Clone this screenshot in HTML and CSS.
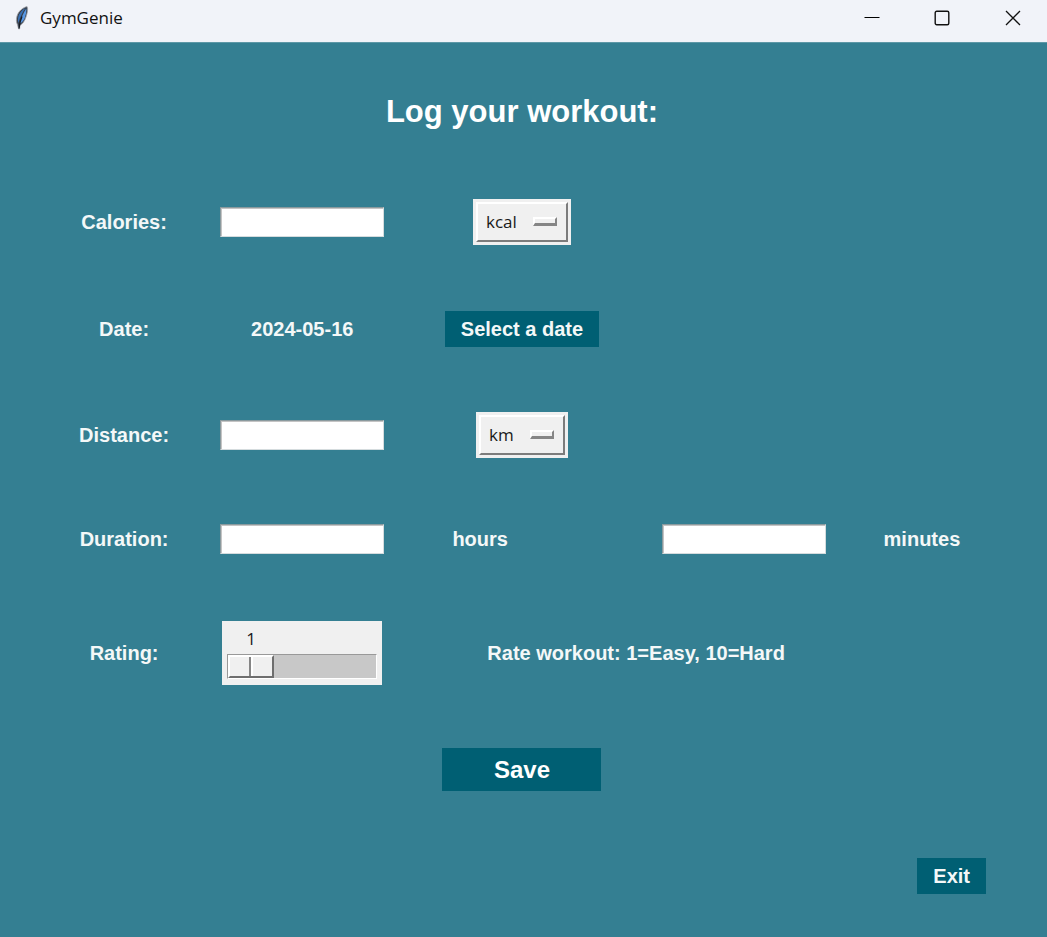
FILE: index.html
```
<!DOCTYPE html>
<html lang="en">
<head>
<meta charset="utf-8">
<meta name="viewport" content="width=device-width, initial-scale=1">
<title>GymGenie</title>
<link rel="stylesheet" href="styles.css">
</head>
<body>
<header class="titlebar">
  <svg class="feather" viewBox="0 0 16 26" width="16" height="26" aria-hidden="true">
    <path d="M13 1.500C9 2.500 4.500 6 3 11c-.9 3-.8 6.500.4 8.500L4.600 24h1l.4-3.500c2.500-1.500 4.800-4.500 6-8.500C13.200 8.500 14.500 4 13 1.500z" fill="#39404c" stroke="#a5a7ae" stroke-width=".8"/>
    <path d="M11.500 3C8.500 4.500 5 8 4.200 12.500c-.4 2-.3 4 0 5.500C6 12.500 8.500 7 11.500 3z" fill="#3a71b5"/>
    <path d="M12.300 3.500C9.500 7.500 7.200 13 5.800 18.500c3-1.500 4.800-4 5.500-7.500.7-2.500 1.300-5 1-7.500z" fill="#5a99e6"/>
    <path d="M8 11.500C6.500 15 5.500 18.500 5 23.500" fill="none" stroke="#141a24" stroke-width="1.200"/>
  </svg>
  <span class="app-name">GymGenie</span>
  <div class="window-buttons">
    <button class="window-button" type="button" aria-label="Minimize">
      <svg viewBox="0 0 16 16" width="16" height="16"><path d="M.5 7.500h15" stroke="#000" fill="none"/></svg>
    </button>
    <button class="window-button" type="button" aria-label="Maximize">
      <svg viewBox="0 0 16 16" width="16" height="16"><rect x="1.200" y="1.200" width="13.600" height="13.600" rx="1.500" stroke="#111" stroke-width="1.400" fill="none"/></svg>
    </button>
    <button class="window-button" type="button" aria-label="Close">
      <svg viewBox="0 0 16 16" width="16" height="16"><path d="M1 1l14 14M15 1L1 15" stroke="#111" stroke-width="1.300" fill="none"/></svg>
    </button>
  </div>
</header>
<main class="content">
  <form class="workout">
    <h1 class="heading">Log your workout:</h1>

    <label class="c1" for="calories">Calories:</label>
    <input class="entry" id="calories" type="text">
    <div class="option">
      <select class="option-select" aria-label="Energy unit"><option>kcal</option></select>
    </div>

    <span class="c1">Date:</span>
    <span>2024-05-16</span>
    <button class="button" type="button">Select a date</button>

    <label class="c1" for="distance">Distance:</label>
    <input class="entry" id="distance" type="text">
    <div class="option">
      <select class="option-select" aria-label="Distance unit"><option>km</option></select>
    </div>

    <label class="c1" for="hours">Duration:</label>
    <input class="entry" id="hours" type="text">
    <label class="hours" for="hours">hours</label>
    <input class="entry" id="minutes" type="text">
    <label for="minutes">minutes</label>

    <label class="c1" for="rating">Rating:</label>
    <div class="scale">
      <output class="scale-value" for="rating">1</output>
      <input class="scale-range" id="rating" type="range" min="1" max="10" value="1">
    </div>
    <span class="hint">Rate workout: 1=Easy, 10=Hard</span>

    <button class="button save" type="submit">Save</button>
    <button class="button exit" type="button">Exit</button>
  </form>
</main>
</body>
</html>
```
FILE: styles.css
```
*,
*::after {
  box-sizing: border-box;
}

body {
  margin: 0;
  min-height: 100vh;
  display: flex;
  flex-direction: column;
  background: #347f92;
  color: #f4f8f8;
  font: bold 20px/24px "Liberation Sans", Arial, sans-serif;
}

.titlebar {
  display: flex;
  align-items: center;
  height: 43px;
  padding: 0 14px 6px;
  background: #f1f3f9;
  border-bottom: 1px solid #5d98a7;
  color: #111;
}

.app-name {
  margin-left: 10px;
  font: 17px/24px "Open Sans", "Noto Sans", sans-serif;
}

.window-buttons {
  display: flex;
  margin-left: auto;
}

.window-button {
  display: grid;
  place-items: center;
  width: 70px;
  height: 36px;
  padding: 0;
  border: 0;
  background: none;
}

.window-button:last-child {
  width: 56px;
  padding-left: 16px;
}

.content {
  flex: 1;
  display: flex;
  padding: 0 61px 20px 58px;
}

.workout {
  flex: 1;
  display: grid;
  grid-template-columns: 132fr 224fr 215fr 228fr 128fr;
  grid-template-rows: 137fr 84fr 129fr 83fr 124fr 104fr 130fr 82fr;
  place-items: center;
}

.heading {
  grid-column: 1 / -1;
  margin: 0;
  font-size: 31px;
  line-height: 40px;
  color: #fff;
}

.c1 {
  grid-column: 1;
}

.entry {
  width: 164px;
  height: 30px;
  padding: 2px 4px;
  border: 1px solid;
  border-color: #8a9a9e #d5dcde #d5dcde #8a9a9e;
  box-shadow: inset 1px 1px #c4c4c4;
  background: #fff;
  color: #000;
  font: 18px/22px "Open Sans", sans-serif;
}

.option {
  position: relative;
  padding: 3px;
  background: #f0f0f0;
}

.option::after {
  content: "";
  position: absolute;
  right: 14px;
  top: 18px;
  width: 24px;
  height: 9px;
  border: 2px solid;
  border-color: #fff #858585 #858585 #fff;
  border-width: 2px 2px 3px 2px;
  pointer-events: none;
}

.option-select {
  display: block;
  appearance: none;
  height: 40px;
  padding: 0 49px 0 8px;
  border: 2px solid;
  border-color: #fff #7c7c7c #7c7c7c #fff;
  border-radius: 0;
  background: #f0f0f0;
  color: #1a1a1a;
  font: 17px/24px "Open Sans", "Noto Sans", sans-serif;
}

.button {
  height: 36px;
  padding: 0 16px;
  border: 0;
  background: #005f73;
  color: #f4f8f8;
  font: inherit;
}

.hours {
  justify-self: start;
  margin-left: 38px;
}

.scale {
  width: 160px;
  padding: 6px 5px;
  background: #f0f0f0;
}

.scale-value {
  display: block;
  padding: 0 0 3px 19px;
  color: #1a1a1a;
  font: 17px/24px "Open Sans", "Noto Sans", sans-serif;
}

.scale-range {
  display: block;
  appearance: none;
  width: 100%;
  height: 25px;
  margin: 0;
  border: 1px solid;
  border-color: #999 #fff #fff #999;
  background: #c8c8c8;
}

.scale-range::-webkit-slider-thumb {
  appearance: none;
  width: 46px;
  height: 23px;
  border: 2px solid;
  border-color: #fff #6e6e6e #6e6e6e #fff;
  background: linear-gradient(90deg, #f0f0f0 19px, #858585 19px, #858585 21px, #fff 21px, #fff 23px, #f0f0f0 23px);
}

.hint {
  grid-column: 3 / 5;
}

.save {
  grid-column: 1 / -1;
  width: 159px;
  height: 43px;
  font-size: 24px;
  color: #fff;
}

.exit {
  grid-column: 5;
  justify-self: end;
}
```
